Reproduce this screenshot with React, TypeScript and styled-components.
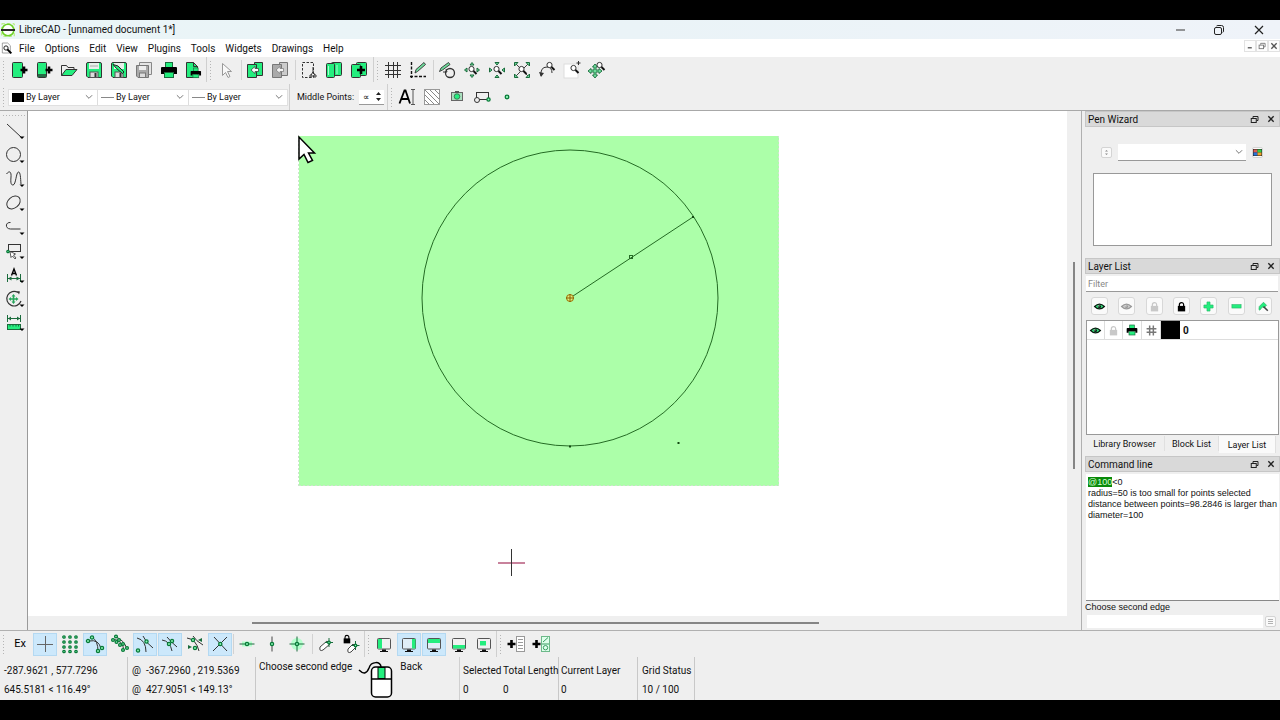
import React from "react";
import styled, { createGlobalStyle, css } from "styled-components";

const GREEN = "#24ee7e";
const DARK = "#1a6b3c";
const UI_FONT = 'Roboto, "Open Sans", sans-serif';
const LOG_FONT = '"Liberation Sans", Roboto, sans-serif';

const GlobalStyle = createGlobalStyle`
  *, *::before, *::after { box-sizing: border-box; }
  body { margin: 0; background: #000; }
  button, input, select { font: inherit; color: inherit; margin: 0; padding: 0; border: 0; background: none; border-radius: 0; }
  svg { display: block; flex: none; overflow: visible; }
`;

/* ---------- icons ---------- */

const G = { fill: GREEN, stroke: "#333", strokeWidth: 1 };
const L = { fill: "none", stroke: "#333", strokeWidth: 1 };
const D = { fill: GREEN, stroke: DARK, strokeWidth: 1 };

const Dot = ({ x, y, r = 1.6 }: { x: number; y: number; r?: number }) => (
  <circle cx={x} cy={y} r={r} fill="#8df5b8" stroke="#087a38" strokeWidth="1.3" />
);
const Plus = ({ x, y, s = 4 }: { x: number; y: number; s?: number }) => (
  <path d={`M${x - s} ${y}H${x + s}M${x} ${y - s}V${y + s}`} stroke="#000" strokeWidth="2.6" />
);
const Lens = ({ x = 9, y = 8 }: { x?: number; y?: number }) => (
  <g>
    <circle cx={x} cy={y} r="2.6" fill="#fff" stroke="#333" />
    <path d={`M${x + 2} ${y + 2}L${x + 5} ${y + 5}`} stroke="#111" strokeWidth="2" />
  </g>
);
const Screen = ({ children }: { children?: React.ReactNode }) => (
  <g>
    <rect x="2.5" y="3.5" width="13" height="10.5" rx="1" fill="#f4f4f4" fillOpacity=".5" stroke="#555" />
    {children}
    <path d="M7 14.5h4v1.5h2v1H5v-1h2z" fill="#111" />
  </g>
);
const Printer = () => (
  <g>
    <rect x="5.5" y="1.5" width="7" height="5" {...D} />
    <path d="M2 6h14q1 0 1 1v6h-3v-2H4v2H1V7q0-1 1-1z" fill="#000" />
    <rect x="4.5" y="11.5" width="9" height="5" {...D} />
  </g>
);
const Eye = ({ c, iris }: { c: string; iris: string }) => (
  <g>
    <path d="M1 9Q9 1 17 9Q9 17 1 9z" fill={iris} stroke={c} strokeWidth="2" />
    <circle cx="9" cy="9" r="2.600" fill={c} />
    <circle cx="8" cy="8" r="1" fill="#fff" />
  </g>
);
const Lock = ({ c }: { c: string }) => (
  <g>
    <path d="M5.500 9V6a3.500 3.500 0 0 1 7 0v3" fill="none" stroke={c} strokeWidth="2" />
    <rect x="3" y="8" width="12" height="9" fill={c} />
  </g>
);
const Tick = () => <path d="M14.500 14.500h5l-2.500 2.500z" fill="#000" />;

const ICONS: Record<string, React.ReactNode> = {
  new: <g><rect x="2.500" y="1.500" width="10" height="15" rx="1" {...G} /><Plus x={14} y={9} s={3.500} /></g>,
  template: <g><rect x="2.500" y="1.500" width="9" height="15" rx="1" {...G} /><rect x="3" y="13" width="8" height="3" fill="#256b45" /><Plus x={14} y={9} s={3.500} /></g>,
  open: <g><path d="M1.500 14.500V4.500h5l1.500 2h6v2.500" {...L} /><path d="M1.500 14.500L6 8.500h11l-5 6z" {...G} /></g>,
  save: <g><path d="M1.500 3Q1.500 1.500 3 1.500h12q1.500 0 1.500 1.500v13.500H3L1.500 15z" {...G} /><rect x="4" y="2" width="10" height="6" fill="#e8efea" /><path d="M5 5h8" stroke="#aaa" /><rect x="5" y="11" width="8" height="5.500" fill="#ddd" stroke="#555" /><rect x="9.500" y="12" width="2" height="4" fill="#333" /></g>,
  saveas: <g><path d="M1.500 3Q1.500 1.500 3 1.500h12q1.500 0 1.500 1.500v13.500H3L1.500 15z" {...G} /><rect x="4" y="2" width="10" height="6" fill="#e8efea" /><rect x="5" y="11" width="8" height="5.500" fill="#ddd" stroke="#555" /><rect x="9.500" y="12" width="2" height="4" fill="#333" /><path d="M3 3.500l5 1.500 6 6-1.500 1.500-6-5z" fill={GREEN} stroke="#222" /></g>,
  saveall: <g><path d="M4.500 1.500h12v12h-12z" fill="#e5e5e5" stroke="#888" /><path d="M1.500 4.500h12v12H3l-1.500-1.500z" fill="#aaa" stroke="#777" /><rect x="4" y="5" width="7" height="4" fill="#eee" /><rect x="4.500" y="12" width="6" height="4.500" fill="#ddd" stroke="#777" /></g>,
  print: <Printer />,
  preview: <g><path d="M1.500 1.500h7l4 4v11h-11z" {...G} /><path d="M8.500 1.500v4h4" {...L} /><g transform="translate(5 6) scale(.65)"><Printer /></g></g>,
  select: <path d="M5.500 2.500v12l3-3 2.500 5 2-1-2.500-5h4z" fill="#f8f8f8" stroke="#999" />,
  copy: <g><path d="M8.500 1.500h8v13h-8z" {...G} /><path d="M1.500 3.500h9v13h-9z" {...G} /><path d="M5 9l4-3.500v2h3.500v3H9v2z" fill="#fff" stroke="#333" strokeWidth=".7" /></g>,
  paste: <g fill="#ccc" stroke="#777"><path d="M8.500 1.500h8v13h-8z" /><path d="M1.500 3.500h9v13h-9z" fill="#aaa" /><path d="M5 9l4-3.500v2h3.500v3H9v2z" fill="#f4f4f4" strokeWidth=".7" /></g>,
  cut: <g><rect x="2.500" y="1.500" width="11" height="15" fill="none" stroke="#333" strokeDasharray="2.500 1.500" /><path d="M13 6v6M13 11l-2 3M13 11l2 3" stroke="#333" fill="none" /><circle cx="11" cy="15" r="1.200" {...L} /><circle cx="15" cy="15" r="1.200" {...L} /></g>,
  pages: <g><rect x="6.500" y="1.500" width="10" height="13" rx="1" {...G} /><rect x="1.500" y="2.500" width="8" height="14" rx="1" {...G} /><path d="M3.500 5v9M12 4v9" stroke="#a5ffd0" /></g>,
  pasteplus: <g><rect x="6.500" y="1.500" width="10" height="13" rx="1" {...G} /><rect x="1.500" y="3.500" width="9" height="13" rx="1" {...G} /><Plus x={11} y={9} s={4} /></g>,
  grid: <path d="M1 4.500h16M1 9.500h16M1 13.500h16M4.500 1v16M9.500 1v16M13.500 1v16" stroke="#333" />,
  draft: <g><path d="M2.500 1v16M1 15.500h16" stroke="#111" strokeWidth="1.400" strokeDasharray="3 1.500" /><path d="M6 12l1-3.500 8-7 1.500 2-8 7z" fill="#6fdc9c" stroke="#333" strokeWidth=".9" /></g>,
  redraw: <g><path d="M1.500 10.500L3 7l7.500-5.500 1.500 2L4.500 9z" fill="#6fdc9c" stroke="#333" strokeWidth=".9" /><circle cx="12" cy="12" r="4.500" {...L} strokeWidth="1.300" /><path d="M5 11h4l-1-3" {...L} /></g>,
  zoomin: <g><path d="M9 1.500l2 2.500h-4zM9 16.500l2-2.500h-4zM1.500 9l2.500-2v4zM16.500 9l-2.500-2v4z" fill="#6fdc9c" stroke={DARK} /><Lens x={8.500} y={8} /></g>,
  zoomout: <g><path d="M9 4L7 1.500h4zM9 14l-2 2.500h4zM4 9L1.500 7v4zM14 9l2.500-2v4z" fill="#6fdc9c" stroke={DARK} /><Lens x={8.500} y={8} /></g>,
  zoomauto: <g><path d="M2 2l14 14M16 2L2 16" stroke="#444" /><path d="M1.500 1.500h3.500L1.500 5zM16.500 1.500v3.500L13 1.500zM1.500 16.500v-3.500L5 16.500zM16.500 16.500h-3.500l3.500-3.500z" fill="#6fdc9c" stroke={DARK} /><Lens x={8.500} y={8} /></g>,
  zoomprev: <g><path d="M3 15Q2 6 9 6q5 0 5 6" {...L} /><path d="M1 11l2 5 3-4z" fill="#333" /><Lens x={11.500} y={4} /></g>,
  zoomwin: <g><rect x="1" y="3" width="14" height="14" fill="#fff" stroke="#ddd" /><Lens x={10.500} y={7} /><path d="M15.500 0v4M13.500 2h4" stroke="#333" /></g>,
  pan: <g><path d="M7 3l2.500 3H8v3h3V7.500l3 2.500-3 2.500V11H8v3h1.500L7 17l-2.500-3H6v-3H3v1.500L0 10l3-2.500V9h3V6H4.500z" fill="#6fdc9c" stroke={DARK} strokeWidth=".9" /><Lens x={11.500} y={4} /></g>,
  text: <g><path d="M1.500 15.500L6.500 2.500h1L12 15.500M3.500 11h7" fill="none" stroke="#000" strokeWidth="1.800" /><path d="M13 1.500h4M15 1.500v15M13 16.500h4" stroke="#555" fill="none" /></g>,
  hatch: <g><rect x="1.500" y="1.500" width="15" height="15" fill="#fff" stroke="#999" /><path d="M2 12l4 4M2 7l9 9M2 2l14 14M7 2l9 9M12 2l4 4" stroke="#888" /></g>,
  image: <g><rect x="3.500" y="4.500" width="11" height="8" fill="#a9e0be" stroke="#666" /><path d="M7 3h4v2H7z" fill="#555" /><circle cx="9" cy="8.500" r="2.800" fill={GREEN} stroke="#333" strokeWidth=".6" /></g>,
  block: <g><rect x="3.500" y="4.500" width="12" height="7" {...L} /><circle cx="4" cy="12" r="2.500" fill="#eee" stroke="#333" /><Dot x={15.500} y={11.500} /></g>,
  point: <Dot x={9} y={9} r={1.800} />,
  line: <g><path d="M2 2l14 13" {...L} /><Tick /></g>,
  circle: <g><circle cx="8.500" cy="8.500" r="7" {...L} /><Tick /></g>,
  curve: <g><path d="M1.500 4c3-4 5-2 4.500 3-.5 6 0 8 2 8 3 0 3-13 5.500-13 2 0 2 6 2.500 12" {...L} /><Tick /></g>,
  ellipse: <g><ellipse cx="8.500" cy="8.500" rx="7.500" ry="5.500" transform="rotate(-40 8.500 8.500)" {...L} /><Tick /></g>,
  polyline: <g><path d="M5.500 4.500C0 4 0 11 5.500 11H15.500" {...L} /><Tick /></g>,
  pick: <g><rect x="3.500" y="2.500" width="12" height="7" {...L} /><path d="M5 9.500l1 6 1.500-1.500 2.500 3 1-1-2.500-3 2-1z" fill="#fff" stroke="#333" strokeWidth=".8" /><Dot x={3} y={9.500} r={1.200} /><Tick /></g>,
  dimension: <g><path d="M2.500 8v8M15.500 8v8M3 12.500h12" {...L} stroke={DARK} /><path d="M3 12.500l3.500-2v4zM15 12.500l-3.500-2v4z" fill={DARK} /><path d="M6.500 9.500L9 3l2.500 6.500M7.500 7.500h3" fill="none" stroke="#000" strokeWidth="1.400" /><Tick /></g>,
  modify: <g><path d="M13 2.500A7.300 7.300 0 1 0 16 11" {...L} strokeWidth="1.200" /><path d="M12 1l3 .5-1 3z" fill="#333" /><path d="M8.500 4l2 2.500h-1.200v1.700h1.700V7l2.500 2-2.500 2V9.800H9.300v1.700h1.200l-2 2.500-2-2.500h1.200V9.800H6V11L3.500 9 6 7v1.200h1.700V6.500H6.500z" fill="#26a65b" /><Tick /></g>,
  measure: <g><path d="M2.500 1v7M15.500 1v7M3 4.500h12" {...L} stroke={DARK} /><path d="M3 4.500l3-2v4zM15 4.500l-3-2v4z" fill={DARK} /><rect x="2.500" y="10.500" width="13" height="5" {...D} /><path d="M5 10.500v2M8 10.500v2M11 10.500v2M13.500 10.500v2" stroke={DARK} /><Tick /></g>,
  sfree: <g><path d="M9.500 1v16M1 9.500h16" stroke="#666" /></g>,
  sgrid: <g>{[3, 9, 15].map(x => [2, 7, 12, 16.500].map(y => <Dot key={`${x}-${y}`} x={x} y={y} r={1.200} />))}</g>,
  send: <g><path d="M3 6Q13 4 15 14M6 2Q12 6 12 16" {...L} /><Dot x={2} y={6} /><Dot x={6} y={2.500} /><Dot x={16} y={13} /><Dot x={12} y={16} /></g>,
  sentity: <g><path d="M1 4Q12 5 13 16M5 2Q13 5 16 14" {...L} />{[[2, 5], [5, 1.500], [5.500, 7], [8, 5], [9, 10], [12, 9], [12, 15], [16, 13]].map(([x, y]) => <Dot key={x + y * 20} x={x} y={y} r={1.400} />)}</g>,
  scenter: <g><path d="M1 3Q10 5 10 17M7 1Q10 8 17 13" {...L} /><Dot x={2} y={15.500} /><Dot x={10.500} y={6.500} /></g>,
  smiddle: <g><path d="M1 5Q9 6 11 16M6 2Q10 7 16 12" {...L} /><Dot x={8} y={9} /><Dot x={11} y={6} /></g>,
  sdist: <g><path d="M1 3Q10 4 13 16M7 1Q10 6 17 10" {...L} /><Dot x={7} y={5} /><Dot x={9} y={13} /><path d="M12 5l4-2v4zM2 10l4 2-4 2z" fill={DARK} /></g>,
  sinter: <g><path d="M3 2l13 14M16 2L2 16" {...L} /><Dot x={9.300} y={9} /></g>,
  rhor: <g><path d="M4 9h10" stroke="#b0ffca" strokeWidth="5" /><path d="M1.500 9h15" stroke={DARK} /><Dot x={9} y={9} /></g>,
  rver: <g><path d="M9 1.500v15" stroke="#444" /><Dot x={9} y={9} /></g>,
  rorth: <g><circle cx="9" cy="9" r="6" fill="#b4ffcd" /><path d="M9 1.500v15M1.500 9h15" stroke={DARK} /><Dot x={9} y={9} /></g>,
  relzero: <g><path d="M3 12l7-6 3 3-7 6q-4 2-3-3z" fill="#fff" stroke="#444" /><path d="M12 3v9M8 7.500h8" stroke={DARK} /><Dot x={12} y={7.500} r={1.300} /></g>,
  lockzero: <g><g transform="translate(0 -1) scale(.55)"><Lock c="#000" /></g><path d="M6 14l5-5 3 3-5 5q-4 2-3-3z" fill="#fff" stroke="#444" /><path d="M13.500 6v9M9.500 10.500h8" stroke={DARK} /><Dot x={13.500} y={10.500} r={1.300} /></g>,
  dleft: <Screen><rect x="3" y="4" width="4" height="9.500" fill={GREEN} /></Screen>,
  dright: <Screen><rect x="12" y="4" width="3.500" height="9.500" fill={GREEN} /></Screen>,
  dtop: <Screen><rect x="3" y="4" width="12" height="4" fill={GREEN} /></Screen>,
  dbottom: <Screen><rect x="3" y="10" width="12" height="3.500" fill={GREEN} /></Screen>,
  dfloat: <Screen><rect x="5" y="6" width="6" height="4.500" fill={GREEN} /></Screen>,
  addmenu: <g><Plus x={4.500} y={9} /><rect x="9.500" y="1.500" width="8" height="15" fill="#fff" stroke="#999" /><path d="M11 4.500h5M11 7.500h5M11 10.500h5M11 13.500h5" stroke="#999" /></g>,
  addtool: <g><Plus x={4.500} y={9} /><rect x="9.500" y="1.500" width="8" height="15" fill="#dfffec" stroke="#6db98a" /><path d="M10 9h7M11 7l5-4.500" stroke="#3a9d63" /><circle cx="13.500" cy="12.700" r="2.200" fill="none" stroke="#3a9d63" /></g>,
  eye: <Eye c="#0a1a10" iris="#36e47f" />,
  eyeoff: <Eye c="#999" iris="#ccc" />,
  lock: <Lock c="#000" />,
  unlock: <Lock c="#c8c8c8" />,
  plus: <path d="M6.500 1.500h5v5h5v5h-5v5h-5v-5h-5v-5h5z" fill={GREEN} stroke="#27b567" />,
  minus: <rect x="1.500" y="6" width="15" height="5.500" fill={GREEN} stroke="#27b567" />,
  edit: <g><path d="M2 9l7-7 5 5-4 4-3-1-4 5-1.500-1z" fill={GREEN} stroke="#27a55f" /><path d="M9 9l7 7" stroke="#444" strokeWidth="2.500" /></g>,
  hash: <path d="M1 6h16M1 12h16M6 1v16M12 1v16" stroke="#777" strokeWidth="2.400" />,
  palette: <g><rect x="0" y="2" width="18" height="14" fill="#222" /><path d="M1 3h8v6H1z" fill="#e05c51" /><path d="M9 3h8v6H9z" fill="#2fd04a" /><path d="M1 9h8v6H1z" fill="#2a74d8" /><path d="M9 9h8v6H9z" fill="#f0a22a" /></g>,
  updown: <path d="M9 4l3 3H6zM9 14l3-3H6z" fill="#888" />,
  list: <path d="M4 5h10M4 9h10M4 13h10" stroke="#999" strokeWidth="1.500" />,
  chevron: <path d="M2 5l7 7 7-7" fill="none" stroke="#666" strokeWidth="2" />,
  min: <path d="M5 9h9" stroke="#555" strokeWidth="1.200" />,
  max: <g fill="none" stroke="#222"><rect x="4.500" y="6.500" width="7" height="7" rx="1.500" /><path d="M6.500 5Q7 4.500 8 4.500h3.500q2 0 2 2V10q0 1-.8 1.500" /></g>,
  close: <path d="M5 5l8 8M13 5l-8 8" stroke="#222" strokeWidth="1.200" />,
  restore: <g fill="none" stroke="#222" strokeWidth="2"><path d="M6 6V3h10v8h-3" /><rect x="2.500" y="7" width="10" height="8" /></g>,
  boldclose: <path d="M3 3l12 12M15 3L3 15" stroke="#222" strokeWidth="3" />,
  mdimin: <path d="M4 13h9" stroke="#555" strokeWidth="3" />,
  mdirestore: <g fill="none" stroke="#777" strokeWidth="2"><path d="M6 6V3h10v8h-3" /><rect x="2.500" y="7" width="10" height="8" /></g>,
  mdiclose: <path d="M3 3l12 12M15 3L3 15" stroke="#555" strokeWidth="3" />,
  doc: <g><path d="M3.500 1.500h8l4 4v11h-12z" fill="#fff" stroke="#777" /><circle cx="9" cy="9" r="3.200" fill="none" stroke="#222" strokeWidth="1.500" /><path d="M11 11l6 6" stroke="#000" strokeWidth="3" /></g>,
  logo: <g><rect x="1" y="1" width="16" height="16" fill="none" stroke="#9bea3e" strokeDasharray="4 3" /><circle cx="9" cy="9" r="7.500" fill="#fff" stroke="#6fd32a" strokeWidth="2" /><path d="M0 9h18" stroke="#222" strokeWidth="2.500" /></g>,
};

const Icon = ({ name, size = 18 }: { name: string; size?: number }) => (
  <svg width={size} height={size} viewBox="0 0 18 18" aria-hidden="true">{ICONS[name]}</svg>
);

/* ---------- window frame ---------- */

const Page = styled.div`
  min-height: 100vh;
  padding: 20px 0;
  display: flex;
  flex-direction: column;
  background: #000;
  font-family: ${UI_FONT};
  font-size: 10px;
  line-height: 14px;
  color: #111;
`;

const Window = styled.div`
  flex: 1;
  display: flex;
  flex-direction: column;
  background: #efefef;
`;

const TitleBar = styled.header`
  height: 19px;
  display: flex;
  align-items: center;
  padding-left: 1px;
  background: linear-gradient(90deg, #eaf5f7, #eaf3f7 50%, #eff3f9);
`;

const Title = styled.h1`
  flex: 1;
  margin: 0 0 0 4px;
  padding-top: 1px;
  font-size: 10px;
  font-weight: 400;
`;

const WindowButton = styled.button`
  width: 39px;
  height: 19px;
  display: flex;
  align-items: center;
  justify-content: center;
  &:last-child { width: 42px; }
`;

const MenuBar = styled.nav`
  height: 18px;
  display: flex;
  align-items: center;
  background: #fff;
`;

const MenuList = styled.div`
  flex: 1;
  display: flex;
  gap: 10px;
  padding: 1px 0 0 7px;
`;

const MdiButton = styled.button`
  width: 12px;
  height: 12px;
  margin-bottom: 4px;
  display: flex;
  align-items: center;
  justify-content: center;
  border: 1px solid #e2e2e2;
  background: #fdfdfd;
`;

/* ---------- toolbars ---------- */

const ToolRow = styled.div<{ $last?: boolean }>`
  height: ${p => (p.$last ? 26 : 27)}px;
  padding-bottom: ${p => (p.$last ? 0 : 2)}px;
  display: flex;
  align-items: stretch;
`;

const ToolGroup = styled.div<{ $end?: number }>`
  display: flex;
  align-items: center;
  gap: 1px;
  padding-right: ${p => p.$end ?? 0}px;
  border-right: 1px solid #cfcfcf;
  &:last-child { border-right: 0; }
`;

const Handle = styled.span<{ $w?: number }>`
  width: ${p => p.$w ?? 6}px;
  height: 20px;
  background: radial-gradient(circle, #b5b5b5 1px, transparent 1px) 2px 0 / 3px 3px repeat-y;
`;

const Divider = styled.span<{ $l?: number }>`
  width: 1px;
  height: 20px;
  margin-left: ${p => p.$l ?? 2}px;
  background: #d2d2d2;
`;

const ToolButton = styled.button<{ $on?: boolean }>`
  width: 24px;
  height: 23px;
  display: flex;
  align-items: center;
  justify-content: center;
  font-size: 11px;
  color: #000;
  border: 1px solid transparent;
  ${p => p.$on && css`
    background: #cce8fb;
    border-color: #b4d9f2;
  `}
`;

const Combos = styled.div`
  height: 17px;
  display: flex;
  margin: 0 1px;
  background: #fff;
  border: 1px solid #e0e0e0;
`;

const Combo = styled.label<{ $w: number }>`
  width: ${p => p.$w}px;
  display: flex;
  align-items: center;
  gap: 2px;
  padding: 0 4px 0 3px;
  & + & { border-left: 1px solid #ddd; }
  select {
    flex: 1;
    min-width: 0;
    appearance: none;
    font-size: 9px;
    line-height: 14px;
    outline: 0;
  }
`;

const SpinLabel = styled.label`
  width: 97px;
  display: flex;
  align-items: center;
  justify-content: space-between;
  padding: 0 3px 0 7px;
  font-size: 9px;
`;

const Spin = styled.span`
  width: 25px;
  height: 15px;
  display: flex;
  align-items: center;
  background: #fff;
  border-bottom: 1px solid #999;
  input { width: 16px; padding-left: 4px; font-size: 9px; outline: 0; }
`;

/* ---------- workspace ---------- */

const Workspace = styled.main`
  flex: 1;
  display: flex;
  border-top: 1px solid #a8a8a8;
  border-bottom: 1px solid #b0b0b0;
`;

const SideBar = styled.aside`
  width: 28px;
  display: flex;
  flex-direction: column;
  align-items: center;
  padding-top: 3px;
  border-right: 1px solid #9a9a9a;
`;

const SideHandle = styled.span`
  width: 23px;
  height: 5px;
  background: radial-gradient(circle, #b5b5b5 1px, transparent 1px) 0 0 / 3px 3px repeat-x;
`;

const SideButton = styled.button`
  width: 27px;
  height: 24px;
  display: flex;
  align-items: center;
  justify-content: center;
`;

const DrawArea = styled.section`
  flex: 1;
  min-width: 0;
  display: grid;
  grid-template: 1fr 14px / 1fr 14px;
  border-right: 1px solid #b0b0b0;
`;

const Canvas = styled.div`
  position: relative;
  overflow: hidden;
  background: #fff;
  > svg { position: absolute; inset: 0; width: 100%; height: 100%; }
`;

const VTrack = styled.div`
  display: flex;
  justify-content: center;
  &::after { content: ""; width: 2px; height: 41%; margin-top: 151px; background: #858585; }
`;

const HTrack = styled.div`
  display: flex;
  align-items: center;
  &::after { content: ""; width: 54.500%; height: 2px; margin-left: 21.600%; background: #858585; }
`;

/* ---------- docks ---------- */

const Docks = styled.aside`
  width: 198px;
  display: flex;
  flex-direction: column;
  padding-left: 3px;
`;

const Dock = styled.section<{ $h?: number }>`
  display: flex;
  flex-direction: column;
  ${p => (p.$h ? css`height: ${p.$h}px;` : css`flex: 1;`)}
`;

const DockHeader = styled.div`
  height: 16px;
  display: flex;
  align-items: center;
  gap: 5px;
  padding: 0 2px;
  background: #d9d9d9;
  border: 1px solid #c6c6c6;
  h2 { flex: 1; margin: 0; padding-top: 2px; font-size: 10px; font-weight: 400; line-height: 14px; }
  button { width: 12px; height: 12px; display: flex; align-items: center; justify-content: center; }
`;

const PenRow = styled.div`
  display: flex;
  align-items: center;
  gap: 6px;
  padding: 17px 17px 0 16px;
`;

const TinyButton = styled.button`
  width: 11px;
  height: 11px;
  display: flex;
  align-items: center;
  justify-content: center;
  background: #fafafa;
  border: 1px solid #d4d4d4;
  border-radius: 2px;
`;

const PenCombo = styled.label`
  flex: 1;
  height: 17px;
  display: flex;
  align-items: center;
  padding-right: 3px;
  background: #fff;
  border-bottom: 1px solid #999;
  select { flex: 1; min-width: 0; appearance: none; outline: 0; }
`;

const PenList = styled.div`
  height: 73px;
  margin: 12px 8px 0 8px;
  background: #fff;
  border: 1px solid #999;
`;

const FilterInput = styled.input`
  height: 16px;
  margin: 2px 2px 0 1px;
  padding-left: 2px;
  font-size: 9px;
  background: #fff;
  border-bottom: 1px solid #999;
  &::placeholder { color: #888; opacity: 1; }
`;

const LayerTools = styled.div`
  display: flex;
  justify-content: space-between;
  padding: 5px 8px 5px 6px;
  button {
    width: 17px;
    height: 18px;
    display: flex;
    align-items: center;
    justify-content: center;
    background: #fafafa;
    border: 1px solid #d8d8d8;
    border-radius: 3px;
  }
`;

const LayerBox = styled.div`
  flex: 1;
  margin: 0 1px;
  background: #fff;
  border: 1px solid #999;
`;

const LayerTable = styled.table`
  width: 100%;
  table-layout: fixed;
  border-collapse: separate;
  border-spacing: 0;
  td { height: 19px; padding: 0; border-bottom: 1px solid #ddd; }
  td:nth-child(-n + 4) { width: 18px; border-right: 1px solid #ddd; }
  td:nth-child(3), td:nth-child(4) { width: 19px; }
  td:nth-child(5) { width: 19px; background: #000; }
  td:last-child { padding: 1px 0 0 3px; font-weight: 700; font-size: 10px; }
  svg { margin: 0 auto; }
`;

const Tabs = styled.div`
  height: 21px;
  display: flex;
  align-items: flex-start;
  padding-top: 1px;
`;

const Tab = styled.button<{ $w: number; $on?: boolean }>`
  width: ${p => p.$w}px;
  height: ${p => (p.$on ? 17 : 15)}px;
  font-size: 9px;
  line-height: 14px;
  white-space: nowrap;
  background: ${p => (p.$on ? "#fafafa" : "#efefef")};
  border-right: 1px solid #e0e0e0;
`;

const CommandLog = styled.div`
  flex: 1;
  margin: 2px 1px 0;
  padding: 3px 0 0 2px;
  background: #fff;
  border-bottom: 1px solid #888;
  font-family: ${LOG_FONT};
  font-size: 9px;
  line-height: 11px;
  white-space: nowrap;
  p { margin: 0; }
  mark { background: #0a8a0a; color: #d8ffd8; }
`;

const Prompt = styled.label`
  font-family: ${LOG_FONT};
  font-size: 9px;
  line-height: 13px;
  padding-bottom: 1px;
`;

const CommandRow = styled.div`
  display: flex;
  align-items: center;
  gap: 2px;
  padding: 0 4px 2px 2px;
  input { flex: 1; min-width: 0; height: 13px; background: #fff; outline: 0; }
`;

/* ---------- status bar ---------- */

const StatusBar = styled.footer`
  height: 43px;
  display: flex;
`;

const StatusCell = styled.div<{ $w: number; $rule?: boolean; $x?: number }>`
  width: ${p => p.$w}px;
  display: flex;
  flex-direction: column;
  gap: 5px;
  padding: 7px 0 0 ${p => p.$x ?? 4}px;
  white-space: pre;
  line-height: 14px;
  border-right: 1px solid ${p => (p.$rule ? "#c8c8c8" : "transparent")};
`;

const MouseCell = styled.div`
  width: 204px;
  display: flex;
  gap: 7px;
  padding: 3px 0 0 3px;
  border-right: 1px solid #d0d0d0;
`;

const tools = (names: string[], on: string[] = []) =>
  names.map(n => (
    <ToolButton key={n} aria-label={n} $on={on.includes(n)}>
      <Icon name={n} />
    </ToolButton>
  ));

const DockTitle = ({ children }: { children: string }) => (
  <DockHeader>
    <h2>{children}</h2>
    <button aria-label={`Float ${children}`}><Icon name="restore" size={9} /></button>
    <button aria-label={`Close ${children}`}><Icon name="boldclose" size={8} /></button>
  </DockHeader>
);

const Drawing = () => (
  <svg role="img" aria-label="Drawing">
    <rect x="271" y="25" width="480" height="350" fill="#acffa9" />
    <path d="M270.500 25v350M750.500 25v350M271 374.500h480" fill="none" stroke="#cfe3ce" strokeDasharray="2 2" />
    <g fill="none" stroke="#246b24">
      <circle cx="542" cy="187" r="148" />
      <path d="M542 187L665 106" />
      <rect x="601.500" y="144.500" width="3" height="3" />
    </g>
    <circle cx="542" cy="187" r="3.500" fill="#dcf07c" stroke="#9a6a00" />
    <path d="M538 187h8M542 183v8" stroke="#8a5a00" />
    <path d="M664 105h2v2h-2zM649.500 331h2v2h-2zM541 334.500h2v2h-2z" fill="#124812" />
    <path d="M470 452h27" stroke="#c8829c" strokeWidth="2" />
    <path d="M483.500 438v27" stroke="#333" />
    <path d="M271 26v22l5-4.500 4 8 4.500-2-4-7.500h6z" fill="#fff" stroke="#000" strokeWidth="1.500" />
  </svg>
);

const MouseHint = () => (
  <svg width="34" height="40" viewBox="0 0 34 40" aria-hidden="true">
    <path d="M0 10c5 5 8 3 10-2 2-7 12-7 12-1" fill="none" stroke="#000" strokeWidth="1.500" />
    <rect x="12.500" y="7" width="20" height="30" rx="4" fill="#fff" stroke="#000" strokeWidth="1.500" />
    <rect x="19" y="7.500" width="7" height="11" fill={GREEN} stroke="#000" />
    <path d="M12.500 19h20" stroke="#000" strokeWidth="1.500" />
  </svg>
);

const MENUS = ["File", "Options", "Edit", "View", "Plugins", "Tools", "Widgets", "Drawings", "Help"];
const SIDE_TOOLS = ["line", "circle", "curve", "ellipse", "polyline", "pick", "dimension", "modify", "measure"];
const LAYER_TOOLS = ["eye", "eyeoff", "unlock", "lock", "plus", "minus", "edit"];

export default function App() {
  return (
    <Page>
      <GlobalStyle />
      <Window>
        <TitleBar>
          <Icon name="logo" size={14} />
          <Title>LibreCAD - [unnamed document 1*]</Title>
          {["min", "max", "close"].map(n => (
            <WindowButton key={n} aria-label={n}><Icon name={n} size={18} /></WindowButton>
          ))}
        </TitleBar>
        <MenuBar>
          <Icon name="doc" size={12} />
          <MenuList>
            {MENUS.map(m => <button key={m}>{m}</button>)}
          </MenuList>
          <MdiButton aria-label="Minimize document"><Icon name="mdimin" size={8} /></MdiButton>
          <MdiButton aria-label="Restore document"><Icon name="mdirestore" size={8} /></MdiButton>
          <MdiButton aria-label="Close document"><Icon name="mdiclose" size={8} /></MdiButton>
        </MenuBar>

        <ToolRow>
          <ToolGroup>
            <Handle />
            {tools(["new", "template", "open", "save", "saveas", "saveall", "print", "preview"])}
          </ToolGroup>
          <ToolGroup $end={2}>
            <Handle />
            {tools(["select"])}
            <Divider />
            {tools(["copy", "paste"])}
            <Divider />
            {tools(["cut", "pages", "pasteplus"])}
          </ToolGroup>
          <ToolGroup>
            <Handle />
            {tools(["grid", "draft"])}
            <Divider />
            {tools(["redraw", "zoomin", "zoomout", "zoomauto", "zoomprev", "zoomwin", "pan"])}
          </ToolGroup>
        </ToolRow>

        <ToolRow $last>
          <ToolGroup>
            <Handle />
            <Combos>
              <Combo $w={88}>
                <svg width="12" height="9" aria-hidden="true"><rect width="12" height="9" /></svg>
                <select aria-label="Pen color"><option>By Layer</option></select>
                <Icon name="chevron" size={8} />
              </Combo>
              <Combo $w={91}>
                <svg width="13" height="9" aria-hidden="true"><path d="M0 4.500h13" stroke="#888" /></svg>
                <select aria-label="Pen width"><option>By Layer</option></select>
                <Icon name="chevron" size={8} />
              </Combo>
              <Combo $w={99}>
                <svg width="13" height="9" aria-hidden="true"><path d="M0 4.500h13" stroke="#888" /></svg>
                <select aria-label="Line type"><option>By Layer</option></select>
                <Icon name="chevron" size={8} />
              </Combo>
            </Combos>
          </ToolGroup>
          <ToolGroup>
            <SpinLabel>
              Middle Points:
              <Spin>
                <input defaultValue="∝" />
                <svg width="7" height="13" aria-hidden="true"><path d="M3.500 2l2.500 3h-5zM3.500 11l2.500-3h-5z" fill="#222" /></svg>
              </Spin>
            </SpinLabel>
          </ToolGroup>
          <ToolGroup>
            <Handle />
            {tools(["text", "hatch", "image", "block", "point"])}
          </ToolGroup>
        </ToolRow>

        <Workspace>
          <SideBar>
            <SideHandle />
            {SIDE_TOOLS.map(n => (
              <SideButton key={n} aria-label={n}><Icon name={n} /></SideButton>
            ))}
          </SideBar>
          <DrawArea>
            <Canvas><Drawing /></Canvas>
            <VTrack />
            <HTrack />
          </DrawArea>
          <Docks>
            <Dock $h={147}>
              <DockTitle>Pen Wizard</DockTitle>
              <PenRow>
                <TinyButton aria-label="Pen order"><Icon name="updown" size={9} /></TinyButton>
                <PenCombo>
                  <select aria-label="Pen"><option></option></select>
                  <Icon name="chevron" size={8} />
                </PenCombo>
                <TinyButton aria-label="Pick color"><Icon name="palette" size={9} /></TinyButton>
              </PenRow>
              <PenList />
            </Dock>
            <Dock $h={198}>
              <DockTitle>Layer List</DockTitle>
              <FilterInput placeholder="Filter" aria-label="Filter layers" />
              <LayerTools>
                {LAYER_TOOLS.map(n => <button key={n} aria-label={n}><Icon name={n} size={11} /></button>)}
              </LayerTools>
              <LayerBox>
                <LayerTable>
                  <tbody>
                    <tr>
                      <td><Icon name="eye" size={11} /></td>
                      <td><Icon name="unlock" size={11} /></td>
                      <td><Icon name="print" size={12} /></td>
                      <td><Icon name="hash" size={11} /></td>
                      <td></td>
                      <td>0</td>
                    </tr>
                  </tbody>
                </LayerTable>
              </LayerBox>
              <Tabs>
                <Tab $w={80}>Library Browser</Tab>
                <Tab $w={54}>Block List</Tab>
                <Tab $w={57} $on>Layer List</Tab>
              </Tabs>
            </Dock>
            <Dock>
              <DockTitle>Command line</DockTitle>
              <CommandLog role="log">
                <p><mark>@100</mark>&lt;0</p>
                <p>radius=50 is too small for points selected</p>
                <p>distance between points=98.2846 is larger than</p>
                <p>diameter=100</p>
              </CommandLog>
              <Prompt htmlFor="command">Choose second edge</Prompt>
              <CommandRow>
                <input id="command" />
                <TinyButton aria-label="Command menu"><Icon name="list" size={9} /></TinyButton>
              </CommandRow>
            </Dock>
          </Docks>
        </Workspace>

        <ToolRow $last>
          <ToolGroup $end={1}>
            <Handle $w={7} />
            <ToolButton>Ex</ToolButton>
            {tools(
              ["sfree", "sgrid", "send", "sentity", "scenter", "smiddle", "sdist", "sinter"],
              ["sfree", "send", "scenter", "smiddle", "sinter"]
            )}
            <Divider $l={0} />
            {tools(["rhor", "rver", "rorth"])}
            <Divider />
            {tools(["relzero", "lockzero"])}
          </ToolGroup>
          <ToolGroup>
            <Handle />
            {tools(["dleft", "dright", "dtop", "dbottom", "dfloat"], ["dright", "dtop"])}
          </ToolGroup>
          <ToolGroup>
            <Handle />
            {tools(["addmenu", "addtool"])}
          </ToolGroup>
        </ToolRow>

        <StatusBar>
          <StatusCell $w={128} $rule><span>-287.9621 , 577.7296</span><span>645.5181 &lt; 116.49°</span></StatusCell>
          <StatusCell $w={128} $rule><span>@  -367.2960 , 219.5369</span><span>@  427.9051 &lt; 149.13°</span></StatusCell>
          <MouseCell>
            <span>Choose second edge</span>
            <MouseHint />
            <span>Back</span>
          </MouseCell>
          <StatusCell $w={39} $x={3}><span>Selected</span><span>0</span></StatusCell>
          <StatusCell $w={60} $rule><span>Total Length</span><span>0</span></StatusCell>
          <StatusCell $w={79} $rule $x={2}><span>Current Layer</span><span>0</span></StatusCell>
          <StatusCell $w={57} $rule><span>Grid Status</span><span>10 / 100</span></StatusCell>
        </StatusBar>
      </Window>
    </Page>
  );
}
